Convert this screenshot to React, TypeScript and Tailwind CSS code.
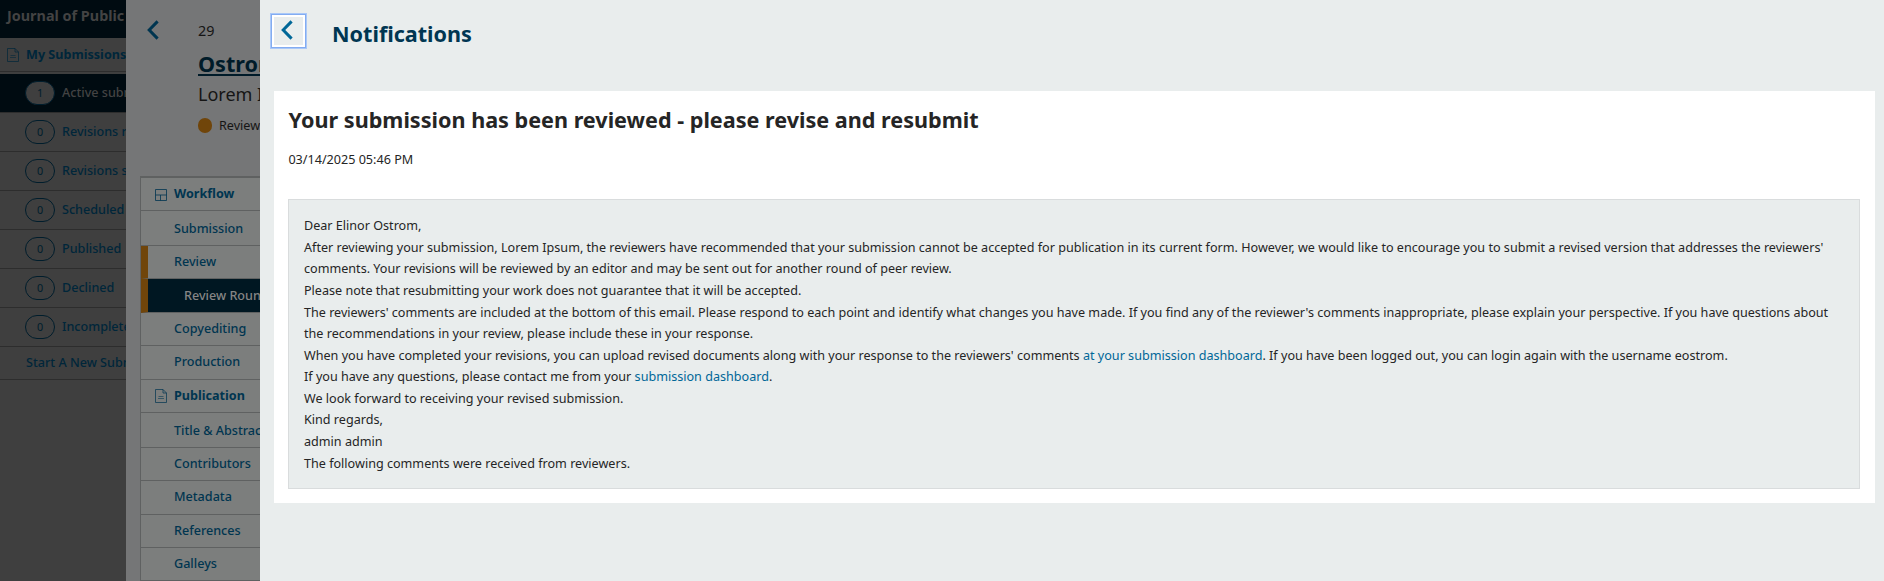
import React from "react";

const submissionViews = [
  { count: 1, label: "Active submissions", active: true },
  { count: 0, label: "Revisions requested", active: false },
  { count: 0, label: "Revisions submitted", active: false },
  { count: 0, label: "Scheduled for publication", active: false },
  { count: 0, label: "Published", active: false },
  { count: 0, label: "Declined", active: false },
  { count: 0, label: "Incomplete submissions", active: false },
];

function ChevronLeft({ className }: { className: string }) {
  return (
    <svg width="12" height="20" viewBox="0 0 12 20" fill="none" className={className}>
      <path d="M10.6 1.4L2.2 10L10.6 18.6" stroke="currentColor" strokeWidth="3" />
    </svg>
  );
}

function DocumentIcon() {
  return (
    <svg width="12" height="14" viewBox="0 0 12 14" fill="none" stroke="currentColor" strokeOpacity="0.7" className="shrink-0">
      <path d="M0.5 0.5H8L11.5 4V13.5H0.5Z M8 0.5V4H11.5" />
      <path d="M3.5 7.5H8.5 M3 9.5H9" strokeWidth="0.8" />
    </svg>
  );
}

function WorkflowIcon() {
  return (
    <svg width="12" height="12" viewBox="0 0 12 12" fill="none" stroke="currentColor" strokeOpacity="0.8" className="shrink-0">
      <path d="M0.5 0.5H11.5V11.5H0.5Z M0.5 6H11.5 M5.5 6V11.5" />
    </svg>
  );
}

function MenuItem({ label, height }: { label: string; height: string }) {
  return <li className={`flex shrink-0 items-center border-b border-[#5f6161] pl-[33px] ${height}`}>{label}</li>;
}

function Dashboard() {
  return (
    <nav className="flex w-[126px] shrink-0 flex-col overflow-hidden whitespace-nowrap bg-[#3f3f3f] text-[12.6px] font-medium text-[#00263a]">
      <div className="flex h-[38px] shrink-0 items-start bg-[#000b11] pl-[7px] pt-[5px] text-[14.4px] font-bold leading-[22px] text-[#434343]">
        Journal of Public Knowledge
      </div>
      <div className="flex h-[34px] shrink-0 items-center gap-[7px] border-b border-[#2d2d2d] pl-[7px] pt-[1.5px] font-bold">
        <DocumentIcon />
        My Submissions
      </div>
      <ul className="mt-[2px]">
        {submissionViews.map((view) => (
          <li
            key={view.label}
            className={`flex h-[39px] items-center gap-[7px] border-b border-[#2d2d2d] pl-[25px] ${view.active ? "bg-[#000b11] text-[#434343]" : ""}`}
          >
            <span
              className={`flex h-6 w-[30px] shrink-0 items-center justify-center rounded-full border border-[#001d2c] text-[10.8px] font-normal text-[#001d2c] ${view.active ? "bg-[#3f3f3f]" : ""}`}
            >
              {view.count}
            </span>
            {view.label}
          </li>
        ))}
      </ul>
      <div className="flex h-[33px] items-center border-b border-[#2d2d2d] pl-[26px]">Start A New Submission</div>
    </nav>
  );
}

function Workflow() {
  return (
    <section className="flex w-[134px] shrink-0 flex-col overflow-hidden whitespace-nowrap bg-[#757677] text-[#151515]">
      <header className="flex h-[176px] shrink-0 pl-[21px]">
        <ChevronLeft className="mt-5 shrink-0 text-[#003550]" />
        <div className="ml-[39px]">
          <div className="mt-[21px] text-[14.4px] leading-5">29</div>
          <div className="mt-[11px] text-[21.6px] font-bold leading-[24px] text-[#001b29] underline decoration-2 underline-offset-2">Ostrom</div>
          <div className="mt-[5px] text-[18px] leading-[26px]">Lorem Ipsum</div>
          <div className="mt-[10px] flex items-center gap-[7px] text-[12.6px] leading-[18px]">
            <span className="-mt-px h-[15px] w-[14px] rounded-full bg-[#70450a]" />
            Review
          </div>
        </div>
      </header>
      <ul className="ml-[14px] flex h-[405px] flex-col border-l border-t-2 border-[#5f6161] bg-[#7c7e7d] text-[12.6px] font-medium text-[#003550]">
        <li className="flex h-[33px] shrink-0 items-center gap-[7px] border-b border-[#5f6161] pl-[14px] pt-px font-bold">
          <WorkflowIcon />
          Workflow
        </li>
        <MenuItem label="Submission" height="h-[35px] pt-[2.5px]" />
        <li className="flex h-[33px] shrink-0 items-center border-b border-l-[7px] border-b-[#5f6161] border-l-[#70450a] pl-[26px]">Review</li>
        <li className="flex h-[34px] shrink-0 items-center border-b border-l-[7px] border-b-[#5f6161] border-l-[#70450a] bg-[#001722] pl-[36px] pt-px text-[#858585]">
          Review Round 1
        </li>
        <MenuItem label="Copyediting" height="h-[33px]" />
        <MenuItem label="Production" height="h-[34px]" />
        <li className="flex h-[33px] shrink-0 items-center gap-[7px] border-b border-[#5f6161] pl-[14px] font-bold">
          <DocumentIcon />
          Publication
        </li>
        <MenuItem label="Title & Abstract" height="h-[35px] pt-[2.5px]" />
        <MenuItem label="Contributors" height="h-[33px]" />
        <MenuItem label="Metadata" height="h-[34px] pb-px" />
        <MenuItem label="References" height="h-[33px]" />
        <MenuItem label="Galleys" height="h-[33px]" />
      </ul>
    </section>
  );
}

function Notifications() {
  return (
    <main className="min-w-0 flex-1 bg-[#e9eded]">
      <header className="flex h-[91px] items-start pl-[10px] pt-[13px]">
        <button className="flex h-9 w-[37px] shrink-0 border border-[#a9c8f8] bg-white" aria-label="Back">
          <span className="flex h-full w-full border border-[#83acf1] p-[2px]">
            <span className="flex h-full w-full justify-center bg-[#e9eded] pt-[3px]">
              <ChevronLeft className="-ml-1 text-[#006798]" />
            </span>
          </span>
        </button>
        <h1 className="ml-[25px] mt-[7px] text-[21.6px] font-bold leading-7 text-[#003652]">Notifications</h1>
      </header>
      <article className="ml-[14px] mr-[9px] h-[412px] bg-white px-[14px] text-[#252525]">
        <h2 className="pl-[0.6px] pt-[15px] text-[21.6px] font-bold leading-7">
          Your submission has been reviewed - please revise and resubmit
        </h2>
        <p className="mt-[17px] pl-[0.4px] text-[12.6px] leading-[18px]">03/14/2025 05:46 PM</p>
        <div className="mr-px mt-[30px] h-[290px] border border-[#d9dcdd] bg-[#e9eded] px-[15px] pt-[15.15px] text-[12.6px] leading-[21.6px]">
          <p>Dear Elinor Ostrom,</p>
          <p>
            After reviewing your submission, Lorem Ipsum, the reviewers have recommended that your submission cannot be accepted for
            publication in its current form. However, we would like to encourage you to submit a revised version that addresses the
            reviewers' comments. Your revisions will be reviewed by an editor and may be sent out for another round of peer review.
          </p>
          <p>Please note that resubmitting your work does not guarantee that it will be accepted.</p>
          <p>
            The reviewers' comments are included at the bottom of this email. Please respond to each point and identify what changes you
            have made. If you find any of the reviewer's comments inappropriate, please explain your perspective. If you have questions
            about the recommendations in your review, please include these in your response.
          </p>
          <p>
            When you have completed your revisions, you can upload revised documents along with your response to the reviewers' comments{" "}
            <a className="text-[#006798]">at your submission dashboard</a>. If you have been logged out, you can login again with the
            username eostrom.
          </p>
          <p>
            If you have any questions, please contact me from your <a className="text-[#006798]">submission dashboard</a>.
          </p>
          <p>We look forward to receiving your revised submission.</p>
          <p>Kind regards,</p>
          <p>admin admin</p>
          <p>The following comments were received from reviewers.</p>
        </div>
      </article>
    </main>
  );
}

export default function App() {
  return (
    <div className="flex h-[581px] w-[1884px] overflow-hidden font-['Noto_Sans',sans-serif]">
      <Dashboard />
      <Workflow />
      <Notifications />
    </div>
  );
}
